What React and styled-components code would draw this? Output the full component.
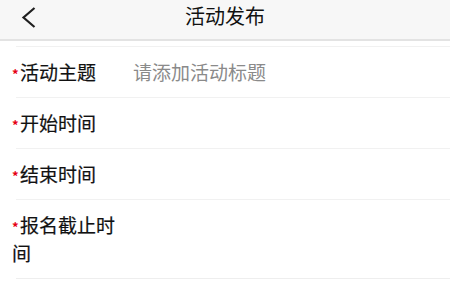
import React from 'react'
import styled, { createGlobalStyle } from 'styled-components'

const GlobalStyle = createGlobalStyle`
    html, body {
        margin: 0;
        padding: 0;
        background: #ffffff;
        font-family: "Noto Sans CJK SC", "Noto Sans", sans-serif;
    }
`

const Page = styled.div`
    width: 450px;
    height: 288px;
    overflow: hidden;
    background: #ffffff;
`

const NavBar = styled.header`
    height: 39px;
    display: grid;
    grid-template-columns: 60px 1fr 60px;
    align-items: center;
    background: #f7f7f7;
    border-bottom: 2px solid #e3e3e3;
`

const BackButton = styled.button`
    height: 39px;
    border: none;
    background: none;
    padding: 0 0 0 21px;
    display: flex;
    align-items: center;
    justify-content: flex-start;
    margin-top: -4px;
    cursor: pointer;
`

const Title = styled.h1`
    margin: 0;
    text-align: center;
    font-size: 20px;
    font-weight: 400;
    color: #111111;
    line-height: 30px;
    margin-top: -8px;
`

const Form = styled.div`
    margin-top: 5px;
`

const Divider = styled.div`
    height: 1px;
    margin-left: 16px;
    background: ${p => p.color || '#f1f1f1'};
`

const Row = styled.div`
    display: flex;
    align-items: flex-start;
    padding: 11px 0 11px 12px;
`

/* the red asterisk marks a required field */
const Label = styled.label`
    width: 110px;
    flex-shrink: 0;
    font-size: 19px;
    line-height: 28px;
    color: #111111;
    -webkit-text-stroke: 0.2px #111111;
    &::before {
        content: '*';
        display: inline-block;
        width: 8px;
        line-height: 10px;
        color: #e60012;
        font-size: 13px;
        font-weight: 700;
        vertical-align: 1px;
        -webkit-text-stroke: 0;
    }
`

const Input = styled.input`
    flex: 1;
    margin-left: 11px;
    border: none;
    outline: none;
    padding: 0;
    background: transparent;
    font-family: inherit;
    font-size: 19px;
    line-height: 28px;
    height: 28px;
    color: #111111;
    &::placeholder {
        color: #8a8a8a;
    }
`

const fields = [
    { label: '活动主题', placeholder: '请添加活动标题' },
    { label: '开始时间' },
    { label: '结束时间' },
    { label: '报名截止时间' },
]

export default function App() {
    return (
        <Page>
            <GlobalStyle />
            <NavBar>
                <BackButton aria-label="返回">
                    <svg width="16" height="24" viewBox="0 0 16 24">
                        <polyline points="13.5,2 2.5,11.5 13.5,21" fill="none" stroke="#1f1f1f" strokeWidth="2.2" />
                    </svg>
                </BackButton>
                <Title>活动发布</Title>
                <div />
            </NavBar>
            <Form>
                {fields.map((f, idx) =>
                    <React.Fragment key={idx}>
                        <Divider />
                        <Row>
                            <Label>{f.label}</Label>
                            {f.placeholder && <Input placeholder={f.placeholder} />}
                        </Row>
                    </React.Fragment>
                )}
                <Divider color="#eeeeee" />
            </Form>
        </Page>
    )
}
